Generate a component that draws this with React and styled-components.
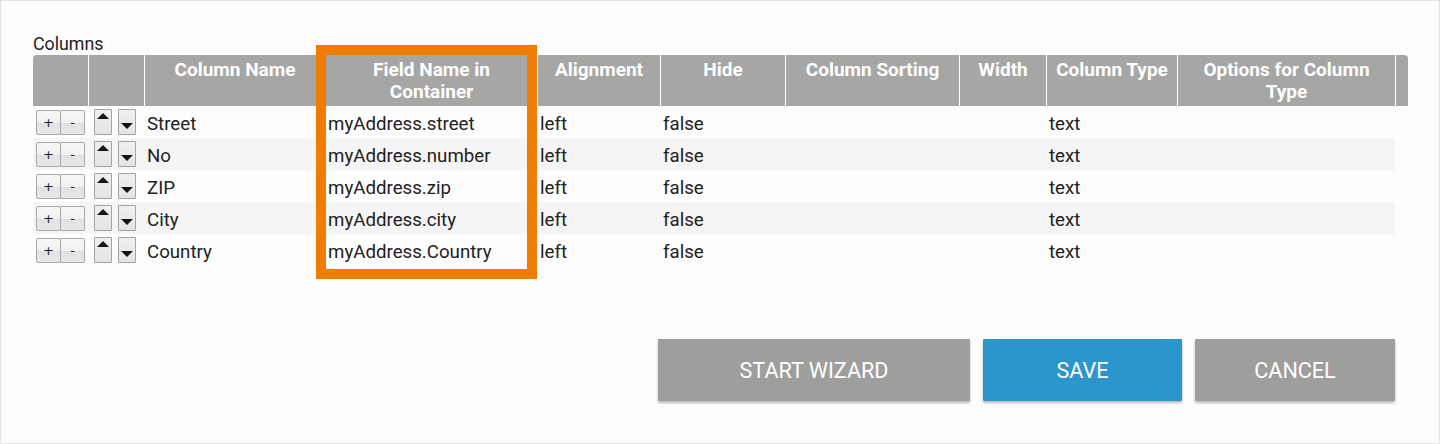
import React from 'react';
import styled, { createGlobalStyle } from 'styled-components';

const GlobalStyle = createGlobalStyle`
  html, body {
    margin: 0;
    padding: 0;
    background: #ffffff;
  }
  * { box-sizing: border-box; }
`;

const COLS = [55, 56, 181, 212, 123, 125, 174, 87, 131, 218];

const columns = [
  '', '', 'Column Name', 'Field Name in Container', 'Alignment', 'Hide',
  'Column Sorting', 'Width', 'Column Type', 'Options for Column Type',
];

const rows = [
  { name: 'Street', field: 'myAddress.street' },
  { name: 'No', field: 'myAddress.number' },
  { name: 'ZIP', field: 'myAddress.zip' },
  { name: 'City', field: 'myAddress.city' },
  { name: 'Country', field: 'myAddress.Country' },
];

const Frame = styled.div`
  width: 1440px;
  height: 444px;
  border: 1px solid #e4e4e4;
  background: #fdfdfd;
  padding: 31px 0 0 32px;
  font-family: Roboto, "Liberation Sans", sans-serif;
  color: #222;
`;

const Label = styled.div`
  font-size: 17.8px;
  line-height: 23px;
  height: 23px;
`;

const TableWrap = styled.div`
  position: relative;
  width: 1375px;
`;

const HeaderRow = styled.div`
  display: grid;
  grid-template-columns: ${COLS.map((w) => w + 'px').join(' ')} 13px;
  height: 51px;
  background: #a6a6a5;
  border-radius: 4px 4px 0 0;
`;

const HeadCell = styled.div`
  border-left: ${(p) => (p.$first ? 'none' : '1px solid #ffffff')};
  color: #ffffff;
  font-weight: 700;
  font-size: 19px;
  line-height: 22px;
  text-align: center;
  padding: 4px 8px 0;
`;

const BodyRow = styled.div`
  display: grid;
  grid-template-columns: ${COLS.map((w) => w + 'px').join(' ')};
  width: 1362px;
  height: 32px;
  background: ${(p) => (p.$striped ? '#f5f5f5' : 'transparent')};
`;

const Cell = styled.div`
  font-size: 18.7px;
  line-height: 28px;
  padding: 4px 0 0 ${(p) => p.$pad || 3}px;
  white-space: nowrap;
  display: flex;
  align-items: center;
`;

const PlusMinus = styled.div`
  display: flex;
  margin-top: -3px;
`;

const SmallBtn = styled.button`
  width: 25px;
  height: 25px;
  margin: 0;
  padding: 0;
  border: 1px solid #a8a8a8;
  border-radius: 2px;
  background: linear-gradient(#f8f8f8 0%, #f0f0f0 50%, #e2e2e2 51%, #e7e7e7 100%);
  font-family: "DejaVu Sans", sans-serif;
  font-size: 13px;
  line-height: 21px;
  color: #223;
  & + & { margin-left: -1px; }
`;

const ArrowBtn = styled.button`
  position: relative;
  width: ${(p) => p.$w}px;
  height: 26px;
  margin: -4px 0 0 ${(p) => p.$ml}px;
  padding: 0;
  border: 1px solid #a3a3a3;
  border-radius: 1px;
  background: linear-gradient(#efefef, #e4e4e4);
`;

const Triangle = styled.span`
  position: absolute;
  left: 50%;
  margin-left: -6px;
  width: 0;
  height: 0;
  border-left: 6px solid transparent;
  border-right: 6px solid transparent;
  ${(p) =>
    p.$up
      ? 'top: 3px; border-bottom: 6px solid #151515;'
      : 'bottom: 5px; border-top: 6px solid #151515;'}
`;

const Highlight = styled.div`
  position: absolute;
  left: 283px;
  top: -10px;
  width: 221px;
  height: 234px;
  border: 10px solid #f07d00;
  pointer-events: none;
`;

const ActionBar = styled.div`
  display: flex;
  justify-content: flex-end;
  gap: 13px;
  margin-top: 73px;
  width: 1362px;
`;

const ActionBtn = styled.button`
  width: ${(p) => p.$w}px;
  height: 62px;
  border: none;
  border-radius: 1px;
  background: ${(p) => (p.$primary ? '#2b96cc' : '#9e9e9c')};
  color: #ffffff;
  font-family: Roboto, "Liberation Sans", sans-serif;
  font-size: 21.6px;
  padding-top: 2px;
  text-transform: uppercase;
  box-shadow: 0 2px 3px rgba(0, 0, 0, 0.28);
`;

export default function App() {
  return (
    <>
      <GlobalStyle />
      <Frame>
        <Label>Columns</Label>
        <TableWrap>
          <HeaderRow>
            {columns.map((c, i) => (
              <HeadCell key={i} $first={i === 0}>{c}</HeadCell>
            ))}
            <HeadCell />
          </HeaderRow>
          {rows.map((r, i) => (
            <BodyRow key={r.name} $striped={i % 2 === 1}>
              <Cell $pad={3}>
                <PlusMinus>
                  <SmallBtn>+</SmallBtn>
                  <SmallBtn>-</SmallBtn>
                </PlusMinus>
              </Cell>
              <Cell $pad={6}>
                <ArrowBtn $w={18} $ml={0}><Triangle $up /></ArrowBtn>
                <ArrowBtn $w={18} $ml={6}><Triangle /></ArrowBtn>
              </Cell>
              <Cell>{r.name}</Cell>
              <Cell>{r.field}</Cell>
              <Cell>left</Cell>
              <Cell>false</Cell>
              <Cell />
              <Cell />
              <Cell>text</Cell>
              <Cell />
            </BodyRow>
          ))}
          <Highlight />
        </TableWrap>
        <ActionBar>
          <ActionBtn $w={312}>Start Wizard</ActionBtn>
          <ActionBtn $w={199} $primary>Save</ActionBtn>
          <ActionBtn $w={200}>Cancel</ActionBtn>
        </ActionBar>
      </Frame>
    </>
  );
}
